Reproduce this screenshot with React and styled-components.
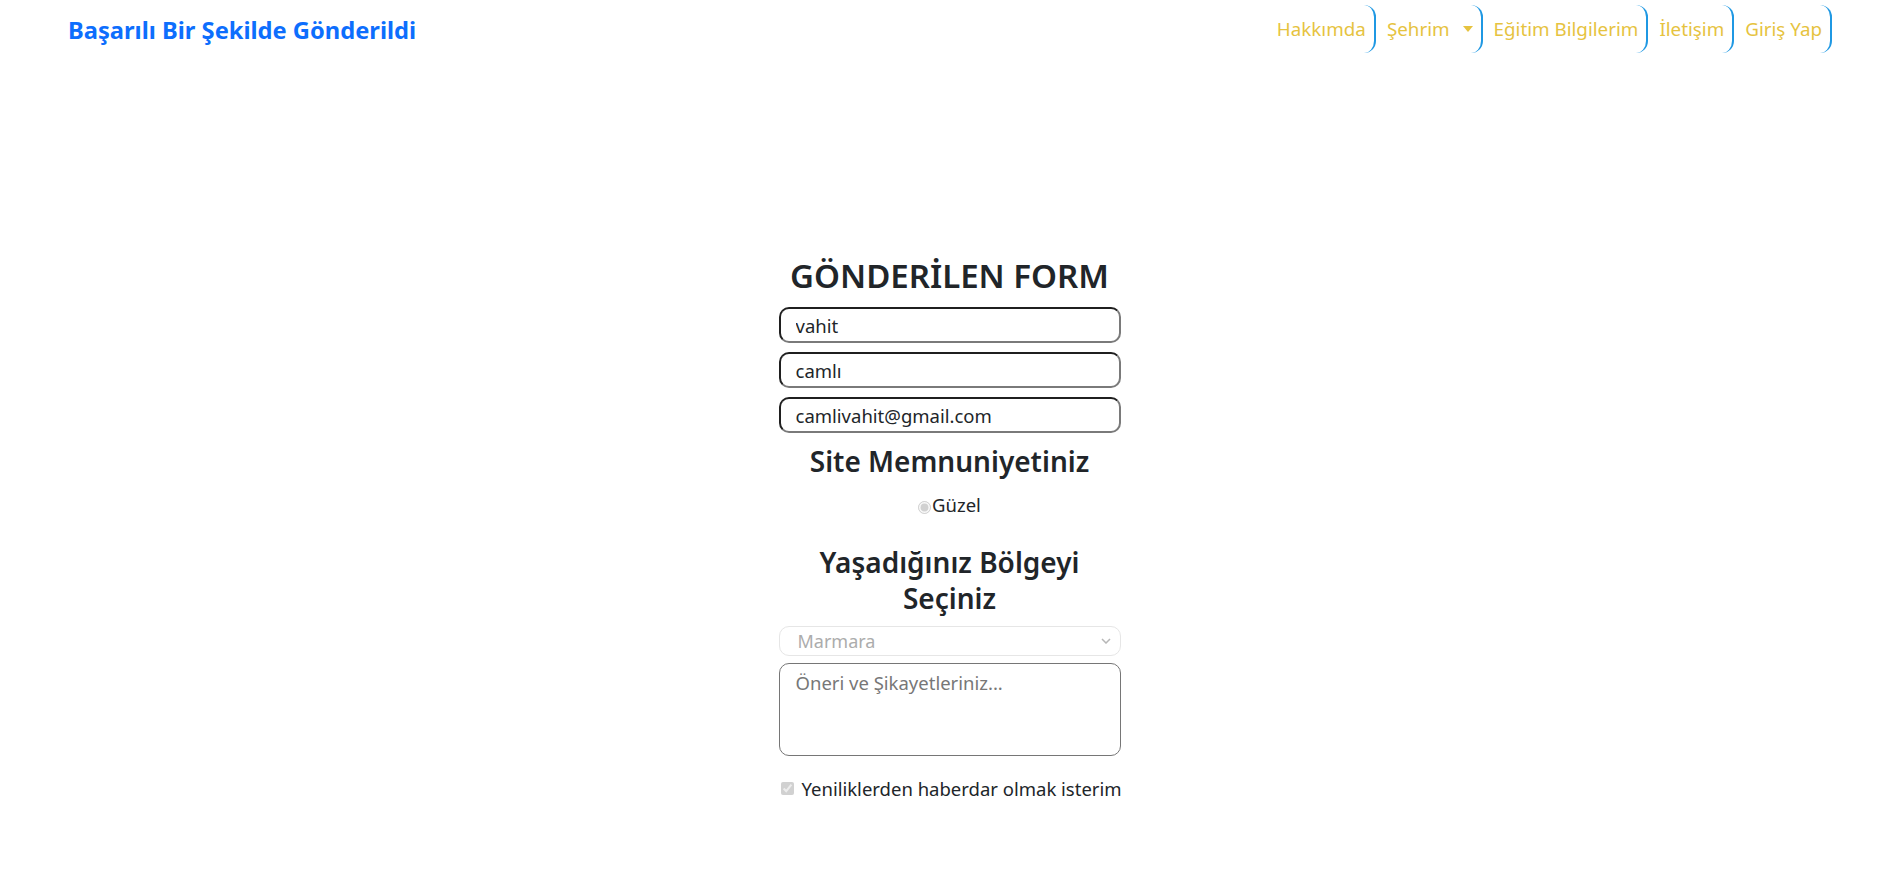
import React from 'react'
import styled, { createGlobalStyle } from 'styled-components'

const GlobalStyle = createGlobalStyle`
  body {
    margin: 0;
    background: #fff;
    font-family: "Noto Sans", "Open Sans", sans-serif;
    color: #212529;
  }
  * { box-sizing: border-box; }
`

const Navbar = styled.nav`
  display: flex;
  justify-content: space-between;
  align-items: flex-start;
  padding: 5px 55px 0 68px;
  height: 58px;
`

const Brand = styled.a`
  margin-top: 7px;
  font-size: 23.7px;
  line-height: 36px;
  font-weight: 700;
  color: #0d6efd;
  text-decoration: none;
`

const NavList = styled.ul`
  display: flex;
  list-style: none;
  margin: 0;
  padding: 0;
`

const NavLink = styled.a`
  display: flex;
  align-items: center;
  gap: 13px;
  height: 48px;
  padding: 0 8px 0 ${p => (p.$first ? '0' : '11px')};
  font-size: 18.8px;
  color: #e6c33f;
  text-decoration: none;
  border-right: 2px solid #1f98e3;
  border-radius: 12px;
`

const Caret = styled.span`
  width: 0;
  height: 0;
  border-top: 6px solid #e6c33f;
  border-left: 5px solid transparent;
  border-right: 5px solid transparent;
`

const Main = styled.main`
  display: flex;
  justify-content: center;
  padding: 198px 0 40px 12px;
`

const FormColumn = styled.form`
  width: 342px;
  display: flex;
  flex-direction: column;
  align-items: center;
`

const Title = styled.h2`
  margin: 0 0 11px;
  font-size: 33px;
  font-weight: 600;
  line-height: 40px;
  white-space: nowrap;
`

const TextInput = styled.input`
  width: 100%;
  height: 36px;
  margin-bottom: 9px;
  padding: 0 15px;
  font-family: inherit;
  font-size: 18.5px;
  color: #212529;
  border-width: 2px;
  border-style: solid;
  border-color: #1f1f1f #7a7a7a #7a7a7a #1f1f1f;
  border-radius: 10px;
  outline: none;
  &:last-of-type { margin-bottom: 0; }
`

const SubTitle = styled.h3`
  margin: ${p => p.$mt}px 0 0;
  max-width: 300px;
  font-size: 28px;
  font-weight: 600;
  line-height: 36px;
  text-align: center;
`

const RadioRow = styled.label`
  display: flex;
  align-items: center;
  height: 26px;
  margin-top: 12px;
  font-size: 18.5px;
`

const Radio = styled.input`
  width: 13px;
  height: 13px;
  margin: 6px 1px 0 0;
`

const Select = styled.select`
  width: 100%;
  height: 30px;
  margin-top: 10px;
  padding: 0 18px;
  font-family: inherit;
  font-size: 18px;
  color: #8a8a8a;
  background: #fff;
  border: 1px solid #dcdcdc;
  border-radius: 10px;
  appearance: none;
  background-image: url("data:image/svg+xml,%3Csvg xmlns='http://www.w3.org/2000/svg' width='10' height='6' viewBox='0 0 10 6'%3E%3Cpath d='M1 1l4 4 4-4' fill='none' stroke='%23999' stroke-width='1.5'/%3E%3C/svg%3E");
  background-repeat: no-repeat;
  background-position: right 9px center;
`

const TextArea = styled.textarea`
  width: 100%;
  height: 93px;
  margin-top: 7px;
  padding: 6px 16px;
  font-family: inherit;
  font-size: 18.5px;
  border: 1px solid #767676;
  border-radius: 10px;
  resize: none;
  outline: none;
  &::placeholder { color: #777; }
`

const CheckRow = styled.label`
  align-self: stretch;
  display: flex;
  align-items: center;
  gap: 8px;
  height: 26px;
  margin-top: 19px;
  font-size: 18.5px;
  white-space: nowrap;
`

const Check = styled.input`
  width: 13px;
  height: 13px;
  margin: 0 0 0 2px;
`

const navItems = ['Hakkımda', 'Şehrim', 'Eğitim Bilgilerim', 'İletişim', 'Giriş Yap']

export default function App() {
  return (
    <>
      <GlobalStyle />
      <Navbar>
        <Brand href="#">Başarılı Bir Şekilde Gönderildi</Brand>
        <NavList>
          {navItems.map((item, i) => (
            <li key={item}>
              <NavLink href="#" $first={i === 0}>
                {item}
                {item === 'Şehrim' && <Caret />}
              </NavLink>
            </li>
          ))}
        </NavList>
      </Navbar>
      <Main>
        <FormColumn onSubmit={e => e.preventDefault()}>
          <Title>GÖNDERİLEN FORM</Title>
          <TextInput defaultValue="vahit" readOnly />
          <TextInput defaultValue="camlı" readOnly />
          <TextInput defaultValue="camlivahit@gmail.com" readOnly />
          <SubTitle $mt={10}>Site Memnuniyetiniz</SubTitle>
          <RadioRow>
            <Radio type="radio" checked disabled readOnly />
            Güzel
          </RadioRow>
          <SubTitle $mt={27}>Yaşadığınız Bölgeyi Seçiniz</SubTitle>
          <Select disabled defaultValue="Marmara">
            <option>Marmara</option>
          </Select>
          <TextArea placeholder="Öneri ve Şikayetleriniz..." />
          <CheckRow>
            <Check type="checkbox" checked disabled readOnly />
            Yeniliklerden haberdar olmak isterim
          </CheckRow>
        </FormColumn>
      </Main>
    </>
  )
}
